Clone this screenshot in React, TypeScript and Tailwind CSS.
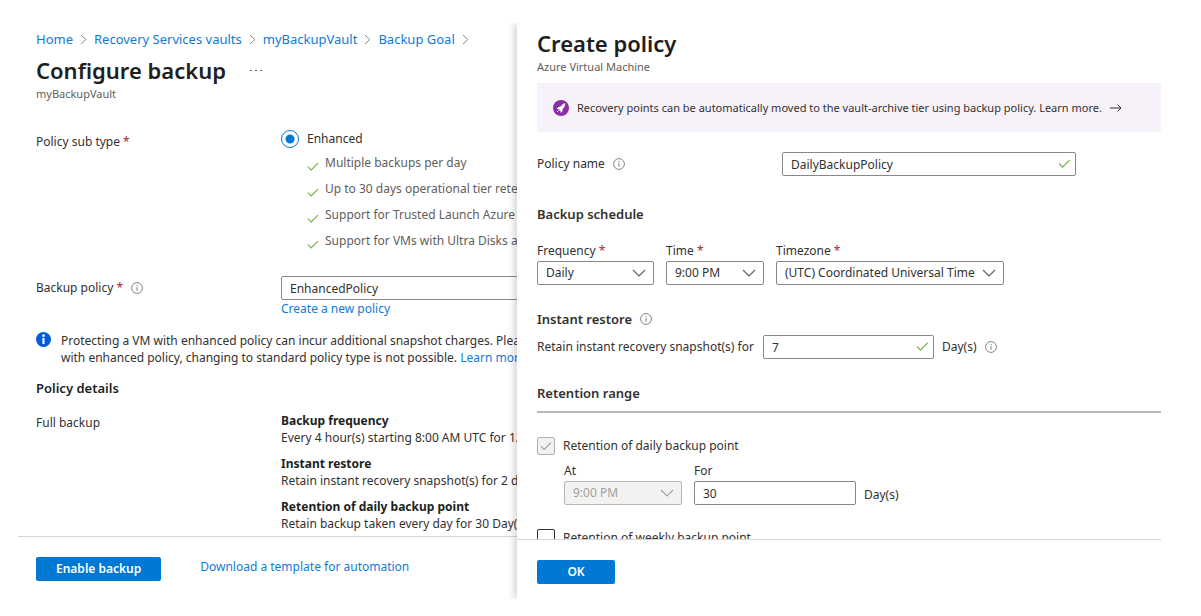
import type { ReactNode } from 'react';

function Check({ className }: { className: string }) {
  return (
    <svg viewBox="0 0 14 10" className={className} fill="none" stroke="currentColor" strokeWidth="1.3" aria-hidden="true">
      <path d="M1 5.2 4.8 9 12.8 1" />
    </svg>
  );
}

function Chevron({ className }: { className: string }) {
  return (
    <svg viewBox="0 0 14 8" className={className} fill="none" stroke="currentColor" strokeWidth="1.1" aria-hidden="true">
      <path d="M1 1l6 6 6-6" />
    </svg>
  );
}

function InfoOutline() {
  return (
    <svg viewBox="0 0 12 12" className="h-3 w-3 shrink-0 text-[#777]" aria-hidden="true">
      <circle cx="6" cy="6" r="5.4" fill="none" stroke="currentColor" strokeWidth="0.9" />
      <path d="M6 5.2v3.4" stroke="currentColor" strokeWidth="1" />
      <circle cx="6" cy="3.6" r="0.6" fill="currentColor" />
    </svg>
  );
}

function InfoSolid() {
  return (
    <svg viewBox="0 0 16 16" className="h-[15px] w-[15px] shrink-0" aria-hidden="true">
      <circle cx="8" cy="8" r="8" fill="#015cda" />
      <path d="M8 6.4v6.4" stroke="#fff" strokeWidth="2.2" />
      <circle cx="8" cy="3.9" r="1.4" fill="#fff" />
    </svg>
  );
}

function Rocket() {
  return (
    <svg viewBox="0 0 16 16" className="h-4 w-4 shrink-0" aria-hidden="true">
      <circle cx="8" cy="8" r="8" fill="#8a2da5" />
      <path d="M12.3 3.3c-1.8.2-3.4 1.3-4.7 3.1L5 7.2 3.8 9.1l2 .1.9.9-.1.7.9.3.3 1.9 1.6-1.4.2-2.5c1.7-1.4 2.7-3.4 2.7-5.8z" fill="#fff" />
      <path d="M4 12l1.8-1.8" stroke="#fff" strokeWidth="0.9" />
    </svg>
  );
}

function Star() {
  return <span className="text-[#a4262c]"> *</span>;
}

function Crumb({ children }: { children: string }) {
  return (
    <li className="flex items-center gap-[7px]">
      <a href="#" className="text-[#0f7bd8]">{children}</a>
      <svg viewBox="0 0 7 11" className="h-[11px] w-[7px] text-[#888]" fill="none" stroke="currentColor" strokeWidth="1" aria-hidden="true">
        <path d="M1 1l4.8 4.5L1 10" />
      </svg>
    </li>
  );
}

function Select({ id, value, width, disabled }: { id: string; value: string; width: string; disabled?: boolean }) {
  return (
    <div className={`relative ${width}`}>
      <select
        id={id}
        disabled={disabled}
        className="block h-6 w-full appearance-none rounded-[2px] border border-[#8a8886] bg-white pl-2 text-[12px] leading-4 text-[#323130] opacity-100 disabled:border-[#b8b6b4] disabled:bg-[#f3f2f1] disabled:text-[#a19f9d]"
      >
        <option>{value}</option>
      </select>
      <Chevron className={`pointer-events-none absolute right-2 top-2 h-2 w-[14px] ${disabled ? 'text-[#a19f9d]' : 'text-[#605e5c]'}`} />
    </div>
  );
}

function TextBox({ id, value, width, valid }: { id: string; value: string; width: string; valid?: boolean }) {
  return (
    <div className={`relative ${width}`}>
      <input
        id={id}
        type="text"
        defaultValue={value}
        className="block h-6 w-full rounded-[2px] border border-[#8a8886] bg-white px-2 text-[12px] leading-4 text-[#323130]"
      />
      {valid && <Check className="pointer-events-none absolute right-[5px] top-[7px] h-[9px] w-[13px] text-[#6fb043]" />}
    </div>
  );
}

function Detail({ title, children }: { title: string; children: ReactNode }) {
  return (
    <div className="leading-[17px]">
      <dt className="font-bold text-[#201f1e]">{title}</dt>
      <dd>{children}</dd>
    </div>
  );
}

const features = [
  'Multiple backups per day',
  'Up to 30 days operational tier retention',
  'Support for Trusted Launch Azure VMs',
  'Support for VMs with Ultra Disks and',
];

function ConfigureBackup() {
  return (
    <main className="flex min-w-0 flex-[499] flex-col overflow-hidden whitespace-nowrap">
      <div className="min-h-0 flex-1 overflow-hidden pl-[18px]">
        <nav aria-label="Breadcrumb" className="pt-[6px]">
          <ol className="flex gap-[7px] text-[13px] leading-5">
            <Crumb>Home</Crumb>
            <Crumb>Recovery Services vaults</Crumb>
            <Crumb>myBackupVault</Crumb>
            <Crumb>Backup Goal</Crumb>
          </ol>
        </nav>
        <div className="mt-[5px] flex items-center gap-6">
          <h1 className="text-[22px] font-semibold leading-8 text-[#201f1e]">Configure backup</h1>
          <button type="button" aria-label="More actions" className="flex gap-[3px]">
            <span className="h-px w-[2px] bg-[#666]" />
            <span className="h-px w-[2px] bg-[#666]" />
            <span className="h-px w-[2px] bg-[#666]" />
          </button>
        </div>
        <p className="text-[11px] leading-4 text-[#605e5c]">myBackupVault</p>

        <div className="mt-7 flex">
          <div className="w-[245px] shrink-0 pt-1 leading-4">Policy sub type<Star /></div>
          <div>
            <div className="flex items-center gap-2">
              <input
                id="enhanced"
                type="radio"
                name="subtype"
                defaultChecked
                className="h-[18px] w-[18px] appearance-none rounded-full border border-[#0078d4] bg-[radial-gradient(circle,#0078d4_4px,#fff_5px)]"
              />
              <label htmlFor="enhanced" className="leading-4">Enhanced</label>
            </div>
            <ul className="mt-[2px] pl-[26px] text-[#605e5c]">
              {features.map((f) => (
                <li key={f} className="flex h-[26px] items-center gap-[6px]">
                  <Check className="mt-[6px] h-[9px] w-[12px] text-[#6fb043]" />
                  {f}
                </li>
              ))}
            </ul>
          </div>
        </div>

        <div className="mt-[22px] flex">
          <div className="flex h-6 w-[245px] shrink-0 items-center gap-2">
            <label htmlFor="policy">Backup policy<Star /></label>
            <InfoOutline />
          </div>
          <div>
            <TextBox id="policy" value="EnhancedPolicy" width="w-[300px]" />
            <a href="#" className="block leading-[18px] text-[#0f7bd8]">Create a new policy</a>
          </div>
        </div>

        <div className="mt-[14px] flex gap-[10px]">
          <InfoSolid />
          <p className="leading-[17px]">
            Protecting a VM with enhanced policy can incur additional snapshot charges. Please
            <br />
            with enhanced policy, changing to standard policy type is not possible. <a href="#" className="text-[#0f7bd8]">Learn more</a>
          </p>
        </div>

        <h2 className="mt-[14px] text-[13px] font-semibold leading-4 text-[#201f1e]">Policy details</h2>
        <div className="mt-4 flex">
          <div className="w-[245px] shrink-0 pt-[2px] leading-[17px]">Full backup</div>
          <dl className="flex flex-col gap-[9px]">
            <Detail title="Backup frequency">Every 4 hour(s) starting 8:00 AM UTC for 12</Detail>
            <Detail title="Instant restore">Retain instant recovery snapshot(s) for 2 day(s)</Detail>
            <Detail title="Retention of daily backup point">Retain backup taken every day for 30 Day(s)</Detail>
          </dl>
        </div>
      </div>
      <footer className="flex h-[63px] shrink-0 items-start gap-[39px] border-t border-[#d6d6d6] pl-[18px] pt-5">
        <button type="button" className="h-6 rounded-[2px] bg-[#0078d4] px-5 font-semibold text-white">Enable backup</button>
        <a href="#" className="leading-5 text-[#0f7bd8]">Download a template for automation</a>
      </footer>
    </main>
  );
}

function CreatePolicy() {
  return (
    <aside className="flex min-w-0 flex-[644] flex-col whitespace-nowrap bg-white shadow-[-2px_0_8px_rgba(0,0,0,0.2)] [clip-path:inset(0_0_0_-12px)]">
      <div className="min-h-0 flex-1 overflow-hidden pl-5">
        <h1 className="pt-1 text-[22px] font-semibold leading-8 text-[#201f1e]">Create policy</h1>
        <p className="text-[11px] leading-4 text-[#605e5c]">Azure Virtual Machine</p>
        <a href="#" className="mt-2 flex h-[49px] items-center gap-2 bg-[#f7f2fa] pl-4 text-[11px]">
          <Rocket />
          Recovery points can be automatically moved to the vault-archive tier using backup policy. Learn more.
          <svg viewBox="0 0 12 10" className="h-[10px] w-3" fill="none" stroke="currentColor" strokeWidth="1" aria-hidden="true">
            <path d="M0 5h11M7.5 1.5 11 5 7.5 8.5" />
          </svg>
        </a>

        <div className="mt-5 flex items-center">
          <div className="flex w-[245px] items-center gap-2">
            <label htmlFor="name">Policy name</label>
            <InfoOutline />
          </div>
          <TextBox id="name" value="DailyBackupPolicy" width="w-[294px]" valid />
        </div>

        <h2 className="mt-[30px] text-[13px] font-semibold leading-4">Backup schedule</h2>
        <div className="mt-[19px] flex gap-3">
          <div>
            <label htmlFor="freq" className="block leading-5">Frequency<Star /></label>
            <Select id="freq" value="Daily" width="w-[117px]" />
          </div>
          <div>
            <label htmlFor="time" className="block leading-5">Time<Star /></label>
            <Select id="time" value="9:00 PM" width="w-[98px]" />
          </div>
          <div>
            <label htmlFor="zone" className="block leading-5">Timezone<Star /></label>
            <Select id="zone" value="(UTC) Coordinated Universal Time" width="w-[228px]" />
          </div>
        </div>

        <h2 className="mt-[26px] flex items-center gap-2 text-[13px] font-semibold leading-4">
          Instant restore
          <InfoOutline />
        </h2>
        <div className="mt-2 flex items-center">
          <label htmlFor="snap" className="w-[226px]">Retain instant recovery snapshot(s) for</label>
          <TextBox id="snap" value="7" width="w-[171px]" valid />
          <span className="ml-2 mr-2">Day(s)</span>
          <InfoOutline />
        </div>

        <h2 className="mt-[26px] border-b-2 border-[#b8b8b8] pb-[10px] text-[13px] font-semibold leading-4">Retention range</h2>

        <div className="mt-6 flex items-center gap-2">
          <span className="relative">
            <input id="daily" type="checkbox" defaultChecked disabled className="block h-[18px] w-[18px] appearance-none rounded-[2px] border border-[#b0aeac] bg-[#f3f2f1]" />
            <Check className="pointer-events-none absolute left-[3px] top-1 h-[10px] w-3 text-[#a19f9d]" />
          </span>
          <label htmlFor="daily">Retention of daily backup point</label>
        </div>
        <div className="mt-[5px] flex gap-3 pl-[27px]">
          <div>
            <label htmlFor="at" className="block leading-[21px]">At</label>
            <Select id="at" value="9:00 PM" width="w-[118px]" disabled />
          </div>
          <div>
            <label htmlFor="for" className="block leading-[21px]">For</label>
            <TextBox id="for" value="30" width="w-[162px]" />
          </div>
          <span className="-ml-1 self-end pb-[2px] leading-4">Day(s)</span>
        </div>
        <div className="mt-6 flex items-center gap-2">
          <input id="weekly" type="checkbox" className="h-[18px] w-[18px] appearance-none rounded-[2px] border border-[#323130]" />
          <label htmlFor="weekly">Retention of weekly backup point</label>
        </div>
      </div>
      <footer className="h-[60px] shrink-0 border-t border-[#d6d6d6] pl-5 pt-5">
        <button type="button" className="block h-6 w-[78px] rounded-[2px] bg-[#0078d4] font-semibold text-white">OK</button>
      </footer>
    </aside>
  );
}

export default function App() {
  return (
    <div className="flex h-screen bg-white pb-[17px] pl-[18px] pr-10 pt-[23px] font-['Noto_Sans','Open_Sans',sans-serif] text-[12px] leading-4 text-[#323130]">
      <ConfigureBackup />
      <CreatePolicy />
    </div>
  );
}
